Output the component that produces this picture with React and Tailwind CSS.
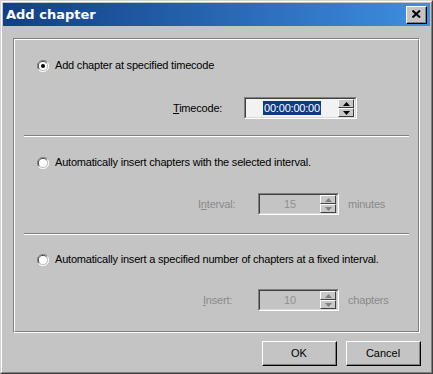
import React from 'react';

const font = { fontFamily: '"Liberation Sans", Arial, sans-serif' };

function Radio({ checked }) {
  return (
    <svg width="12" height="12" viewBox="0 0 12 12" className="shrink-0">
      <path d="M10.5 2.5 A5.5 5.5 0 0 0 1.5 9.5" stroke="#808080" fill="none" strokeWidth="1" />
      <path d="M9.5 3.2 A4.5 4.5 0 0 0 2.3 8.8" stroke="#404040" fill="none" strokeWidth="1" />
      <circle cx="6" cy="6" r="4" fill="#ffffff" />
      <path d="M1.5 9.5 A5.5 5.5 0 0 0 10.5 2.5" stroke="#ffffff" fill="none" strokeWidth="1" />
      {checked && <circle cx="6" cy="6" r="2" fill="#000000" />}
    </svg>
  );
}

function Spin({ disabled }) {
  const c = disabled ? '#808080' : '#000000';
  return (
    <div className="flex flex-col w-[16px] h-[18px] shrink-0">
      {[0, 1].map((i) => (
        <div
          key={i}
          className="flex-1 flex items-center justify-center bg-[#c8c8c8] border-t border-l border-t-white border-l-white border-b border-r border-b-[#404040] border-r-[#404040]"
        >
          <svg width="7" height="4" viewBox="0 0 7 4">
            {i === 0 ? (
              <polygon points="3.5,0 7,4 0,4" fill={c} />
            ) : (
              <polygon points="0,0 7,0 3.5,4" fill={c} />
            )}
          </svg>
        </div>
      ))}
    </div>
  );
}

function SpinBox({ value, width, disabled, selected }) {
  return (
    <div
      className={`flex items-center h-[22px] border-t border-l border-t-[#808080] border-l-[#808080] border-b border-r border-b-white border-r-white ${width}`}
    >
      <div
        className={`flex-1 h-full flex items-center border-t border-l border-t-[#404040] border-l-[#404040] border-b border-r border-b-[#d8d8d8] border-r-[#d8d8d8] pr-[1px] ${disabled ? 'bg-[#c4c4c4]' : 'bg-[#f2f2f2]'}`}
      >
        <div className="flex-1 flex justify-center">
          <span
            className={`text-[11px] leading-[14px] px-[1px] ${selected ? 'bg-[#0d3a82] text-white' : ''} ${disabled ? 'text-[#909090]' : ''}`}
          >
            {value}
          </span>
        </div>
        <Spin disabled={disabled} />
      </div>
    </div>
  );
}

function Separator() {
  return (
    <div className="mx-[9px] flex flex-col">
      <div className="h-px bg-[#808080]" />
      <div className="h-px bg-white" />
    </div>
  );
}

function Button({ children }) {
  return (
    <div className="w-[75px] h-[25px] bg-[#c4c4c4] border-t border-l border-t-white border-l-white border-b border-r border-b-[#000000] border-r-[#000000]">
      <div className="w-full h-full flex items-center justify-center border-b border-r border-b-[#808080] border-r-[#808080] text-[11px] text-black">
        {children}
      </div>
    </div>
  );
}

export default function App() {
  return (
    <div className="w-[433px] h-[374px] bg-[#c4c4c4] border-t border-l border-t-[#d4d4d4] border-l-[#d4d4d4] border-b border-r border-b-[#404040] border-r-[#404040]" style={font}>
      <div className="w-full h-full border-t border-l border-t-white border-l-white border-b border-r border-b-[#808080] border-r-[#808080] p-[1px] flex flex-col">
        {/* Title bar */}
        <div className="h-[23px] flex items-center justify-between pl-[3px] pr-[3px] bg-gradient-to-r from-[#123f85] to-[#3f8fe0]">
          <span className="text-white font-bold text-[13px]" style={{ fontFamily: '"DejaVu Sans", Verdana, sans-serif' }}>
            Add chapter
          </span>
          <div className="w-[21px] h-[18px] bg-[#c4c4c4] border-t border-l border-t-white border-l-white border-b border-r border-b-[#000000] border-r-[#000000]">
            <div className="w-full h-full flex items-center justify-center border-b border-r border-b-[#808080] border-r-[#808080]">
              <svg width="9" height="8" viewBox="0 0 9 8">
                <path d="M0.5 0.5 L8 7.5 M8 0.5 L0.5 7.5" stroke="#000" strokeWidth="2" />
              </svg>
            </div>
          </div>
        </div>

        {/* Panel */}
        <div className="mt-[12px] ml-[10px] w-[407px] h-[295px] border-t border-l border-t-[#808080] border-l-[#808080] border-b border-r border-b-white border-r-white">
          <div className="w-full h-full border-t border-l border-t-white border-l-white border-b border-r border-b-[#808080] border-r-[#808080] flex flex-col text-[11px] leading-[13px] tracking-[-0.2px] text-black">
            {/* Section 1 */}
            <div className="h-[95px] pt-[19px] flex flex-col">
              <div className="flex items-center gap-[6px] pl-[22px]">
                <Radio checked />
                <span>Add chapter at specified timecode</span>
              </div>
              <div className="flex items-center mt-[25px] pl-[158px]">
                <span className="w-[71px]"><u>T</u>imecode:</span>
                <SpinBox value="00:00:00:00" width="w-[113px]" selected />
              </div>
            </div>
            <Separator />
            {/* Section 2 */}
            <div className="h-[96px] pt-[19px] flex flex-col">
              <div className="flex items-center gap-[6px] pl-[22px]">
                <Radio />
                <span>Automatically insert chapters with the selected interval.</span>
              </div>
              <div className="flex items-center mt-[24px] pl-[183px] text-[#8a8a8a]">
                <span className="w-[60px]">I<u>n</u>terval:</span>
                <SpinBox value="15" width="w-[81px]" disabled />
                <span className="ml-[9px]">minutes</span>
              </div>
            </div>
            <Separator />
            {/* Section 3 */}
            <div className="flex-1 pt-[18px] flex flex-col">
              <div className="flex items-center gap-[6px] pl-[22px]">
                <Radio />
                <span>Automatically insert a specified number of chapters at a fixed interval.</span>
              </div>
              <div className="flex items-center mt-[23px] pl-[188px] text-[#8a8a8a]">
                <span className="w-[55px]"><u>I</u>nsert:</span>
                <SpinBox value="10" width="w-[81px]" disabled />
                <span className="ml-[9px]">chapters</span>
              </div>
            </div>
          </div>
        </div>

        {/* Buttons */}
        <div className="flex justify-end gap-[9px] mt-[8px] pr-[9px]">
          <Button>OK</Button>
          <Button>Cancel</Button>
        </div>
      </div>
    </div>
  );
}
